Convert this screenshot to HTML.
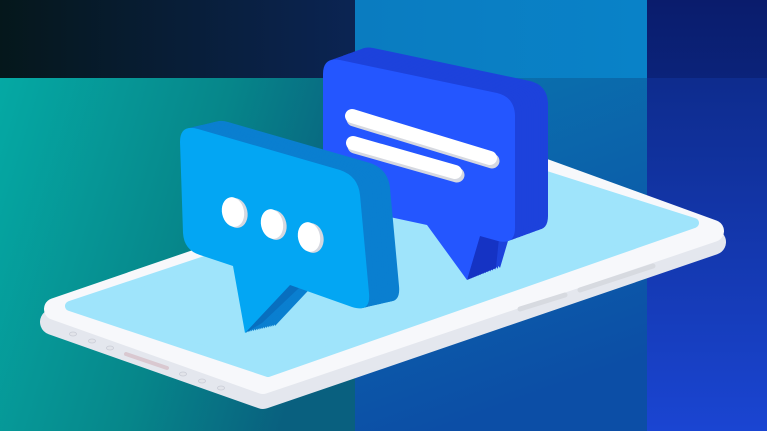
<!DOCTYPE html>
<html><head><meta charset="utf-8"><style>
html,body{margin:0;padding:0;width:767px;height:431px;overflow:hidden;background:#0a6fa8}
svg{display:block}
</style></head><body>
<svg width="767" height="431" viewBox="0 0 767 431" xmlns="http://www.w3.org/2000/svg" xmlns:xlink="http://www.w3.org/1999/xlink">
<defs>
<linearGradient id="tl" x1="0" x2="1" y1="0" y2="0"><stop offset="0" stop-color="#05171b"/><stop offset="1" stop-color="#0b2453"/></linearGradient>
<linearGradient id="tm" x1="0" x2="1"><stop offset="0" stop-color="#0a7cc0"/><stop offset="1" stop-color="#0982c8"/></linearGradient>
<linearGradient id="tr" x1="0" x2="0" y1="0" y2="1"><stop offset="0" stop-color="#0a1c6c"/><stop offset="1" stop-color="#0b237a"/></linearGradient>
<linearGradient id="bl" x1="0" x2="1" y1="0" y2="0.3"><stop offset="0" stop-color="#05a9a4"/><stop offset="0.6" stop-color="#06868a"/><stop offset="1" stop-color="#09607f"/></linearGradient>
<linearGradient id="bm" x1="0" x2="0.3" y1="0" y2="1"><stop offset="0" stop-color="#0a74ae"/><stop offset="1" stop-color="#0c4ea6"/></linearGradient>
<linearGradient id="br" x1="0" x2="0" y1="0" y2="1"><stop offset="0" stop-color="#0b267e"/><stop offset="1" stop-color="#1a45d2"/></linearGradient>
<path id="rb" d="M323,74 Q323,57 340,60 L497,93 Q514,97 515,115 L515,228 Q515,245 498,241 L480,236 L467,280 L427,225 L339,206 Q323,203 323,186 Z"/>
<path id="lb" d="M180,142 Q180,124 198,129 L340,170 Q358,176 360,195 L369,293 Q371,313 352,307 L290,285 L245,333 L233,266 L200,255 Q184,250 183,233 Z"/>
</defs>
<rect x="0" y="0" width="355" height="78" fill="url(#tl)"/>
<rect x="355" y="0" width="292" height="78" fill="url(#tm)"/>
<rect x="647" y="0" width="120" height="431" fill="url(#br)"/>
<rect x="647" y="0" width="120" height="78" fill="url(#tr)"/>
<rect x="0" y="78" width="355" height="353" fill="url(#bl)"/>
<rect x="355" y="78" width="292" height="353" fill="url(#bm)"/>

<!-- phone side -->
<polygon points="53,322 263,396 713,242 504,164" fill="#e4e7ee" stroke="#e4e7ee" stroke-width="26" stroke-linejoin="round"/>
<!-- phone top -->
<polygon points="55,309 263,383 713,231 504,155" fill="#f7f8fb" stroke="#f7f8fb" stroke-width="22" stroke-linejoin="round"/>
<!-- screen -->
<polygon points="70,306 268,372 694,223 502,162" fill="#9fe4fb" stroke="#9fe4fb" stroke-width="10" stroke-linejoin="round"/>
<!-- buttons -->
<g fill="#e2e4ea" stroke="#c9ccd6" stroke-width="0.8">
<ellipse cx="73" cy="334" rx="3.5" ry="2"/><ellipse cx="92" cy="341" rx="3.5" ry="2"/><ellipse cx="110" cy="348" rx="3.5" ry="2"/>
<ellipse cx="183" cy="374" rx="3.5" ry="2"/><ellipse cx="202" cy="381" rx="3.5" ry="2"/><ellipse cx="221" cy="388" rx="3.5" ry="2"/>
</g>
<line x1="126" y1="354" x2="167" y2="368" stroke="#d9c8d0" stroke-width="4" stroke-linecap="round"/>
<line x1="520" y1="309" x2="565" y2="295" stroke="#d7dae0" stroke-width="5" stroke-linecap="round"/>
<line x1="580" y1="290" x2="653" y2="266" stroke="#d7dae0" stroke-width="5" stroke-linecap="round"/>

<!-- right bubble extrusion -->
<g fill="#1d42dc">
<use xlink:href="#rb" href="#rb" transform="translate(33,-12)"/>
<use xlink:href="#rb" href="#rb" transform="translate(30.6,-11.1)"/>
<use xlink:href="#rb" href="#rb" transform="translate(28.2,-10.2)"/>
<use xlink:href="#rb" href="#rb" transform="translate(25.8,-9.4)"/>
<use xlink:href="#rb" href="#rb" transform="translate(23.4,-8.5)"/>
<use xlink:href="#rb" href="#rb" transform="translate(21,-7.6)"/>
<use xlink:href="#rb" href="#rb" transform="translate(18.6,-6.8)"/>
<use xlink:href="#rb" href="#rb" transform="translate(16.2,-5.9)"/>
<use xlink:href="#rb" href="#rb" transform="translate(13.8,-5)"/>
<use xlink:href="#rb" href="#rb" transform="translate(11.4,-4.1)"/>
<use xlink:href="#rb" href="#rb" transform="translate(9,-3.3)"/>
<use xlink:href="#rb" href="#rb" transform="translate(6.6,-2.4)"/>
<use xlink:href="#rb" href="#rb" transform="translate(4.2,-1.5)"/>
<use xlink:href="#rb" href="#rb" transform="translate(1.8,-0.7)"/>
</g>
<polygon points="467,280 480,236 499,238 496,268" fill="#1533c4"/>
<use xlink:href="#rb" href="#rb" fill="#2456ff"/>
<g stroke-linecap="round">
<line x1="354" y1="119" x2="492" y2="161" stroke="#d5d8e0" stroke-width="15"/>
<line x1="352" y1="116" x2="490" y2="158" stroke="#ffffff" stroke-width="14"/>
<line x1="355" y1="146" x2="457" y2="175" stroke="#d5d8e0" stroke-width="15"/>
<line x1="353" y1="143" x2="455" y2="172" stroke="#ffffff" stroke-width="14"/>
</g>

<!-- left bubble extrusion -->
<g fill="#0a7fd0">
<use xlink:href="#lb" href="#lb" transform="translate(30,-7)"/>
<use xlink:href="#lb" href="#lb" transform="translate(27.8,-6.5)"/>
<use xlink:href="#lb" href="#lb" transform="translate(25.6,-6)"/>
<use xlink:href="#lb" href="#lb" transform="translate(23.4,-5.5)"/>
<use xlink:href="#lb" href="#lb" transform="translate(21.2,-5)"/>
<use xlink:href="#lb" href="#lb" transform="translate(19,-4.4)"/>
<use xlink:href="#lb" href="#lb" transform="translate(16.8,-3.9)"/>
<use xlink:href="#lb" href="#lb" transform="translate(14.6,-3.4)"/>
<use xlink:href="#lb" href="#lb" transform="translate(12.4,-2.9)"/>
<use xlink:href="#lb" href="#lb" transform="translate(10.2,-2.4)"/>
<use xlink:href="#lb" href="#lb" transform="translate(8,-1.9)"/>
<use xlink:href="#lb" href="#lb" transform="translate(5.8,-1.4)"/>
<use xlink:href="#lb" href="#lb" transform="translate(3.6,-0.8)"/>
<use xlink:href="#lb" href="#lb" transform="translate(1.4,-0.3)"/>
</g>
<polygon points="245,333 290,285 300,287 262,323" fill="#086fbf"/>
<use xlink:href="#lb" href="#lb" fill="#03a6f3"/>
<g>
<ellipse cx="236" cy="213" rx="11.5" ry="15" fill="#d5d8e0" transform="rotate(-12 236 213)"/>
<ellipse cx="233" cy="212" rx="11" ry="15" fill="#fff" transform="rotate(-12 233 212)"/>
<ellipse cx="275" cy="225" rx="11.5" ry="15" fill="#d5d8e0" transform="rotate(-12 275 225)"/>
<ellipse cx="272" cy="224" rx="11" ry="15" fill="#fff" transform="rotate(-12 272 224)"/>
<ellipse cx="312" cy="238" rx="11.5" ry="15" fill="#d5d8e0" transform="rotate(-12 312 238)"/>
<ellipse cx="309" cy="237" rx="11" ry="15" fill="#fff" transform="rotate(-12 309 237)"/>
</g>
</svg>
</body></html>
